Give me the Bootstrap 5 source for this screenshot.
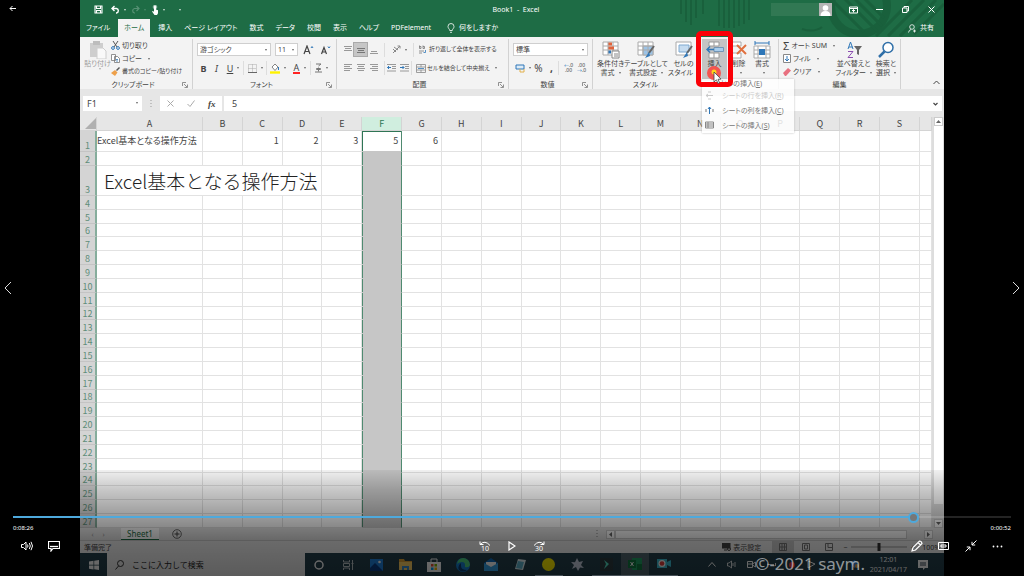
<!DOCTYPE html>
<html lang="ja">
<head>
<meta charset="utf-8">
<meta name="viewport" content="width=device-width, initial-scale=1">
<title>Book1 - Excel</title>
<link href="https://cdn.jsdelivr.net/npm/bootstrap@5.3.0/dist/css/bootstrap.min.css" rel="stylesheet">
<style>
:root{--xl:#1e6c45;--ink:#444;--line:#e2e2e2}
html,body{height:100%}
body{background:#000;font-family:"Noto Sans","Noto Sans CJK JP",sans-serif;font-size:7px;line-height:9px;color:var(--ink);overflow:hidden}
button,input,select{font:inherit;color:inherit;border:0;background:none;padding:0;margin:0;border-radius:0;appearance:none}
button{display:inline-flex;align-items:center;justify-content:center;white-space:nowrap}
svg{display:block;flex:none}
svg:not([fill]){fill:none}
svg:not([stroke]){stroke:currentColor}
a{color:inherit;text-decoration:none}
.palt{font-feature-settings:"palt"}
.even{flex:1 1 0;min-width:0}
.stage{margin:0 80px;height:100%}
/* title and tabs */
.titlebar{background:var(--xl);color:#fff;height:37px}
.deco{top:0;right:0;width:350px;height:37px;opacity:.4}
.caption-row{height:19px}
.caption-row .ic{width:20px}
.winbtn{width:26px;height:18px}
.acct{width:48px;height:13px;background:#3d805e;opacity:.6}
.tabs a{padding:0 6px;line-height:18px;height:18px;white-space:nowrap}
.tabs a.on{background:#f3f3f3;color:var(--xl);margin:0 2px;padding:0 6px}
.dd::after{content:"";border:1px solid transparent;border-top:2px solid currentColor;border-bottom:0;margin-left:4px;opacity:.8;display:inline-block;vertical-align:middle}
/* ribbon */
.ribbon{background:#f3f3f3;height:52px}
.grp{border-right:1px solid #d2d2d2;margin:2px 0 0;padding:0 4px;min-width:0}
.grp .body{height:41px}
.grp .cap{height:9px;line-height:9px}
.line{height:13px;gap:2px;white-space:nowrap}
.line2{height:18px;white-space:nowrap}
.line2+.line2{height:14px}
.tight{font-size:6px}
.ib{width:13px;height:13px;flex:none}
.ib.on{background:#c6c6c6;outline:1px solid #aaa}
.vsep{width:1px;height:14px;background:#ddd;flex:none}
.big{flex-direction:column;justify-content:flex-start;padding-top:2px;line-height:9px}
.big svg{width:18px;height:18px}
.pick{background:#fff;border:1px solid #cfcfcf;height:13px;padding:0 2px;min-width:0}
.pickwrap::after{content:"";position:absolute;right:4px;top:6px;border:1px solid transparent;border-top:2px solid #666;border-bottom:0}
.g1{flex:104 1 0}.g2{flex:135 1 0}.g3{flex:163 1 0}.g4{flex:75 1 0}.g5{flex:97 1 0}.g6{flex:72 1 0}.g7{flex:113 1 0}.g8{flex:35 1 0}
.ins{background:#c4c4c4;width:25px;height:42px}
.ring{left:-6px;top:-8px;width:37px;height:56px;border:5px solid #fb0007;border-radius:5px;z-index:5}
.spot{left:5px;top:26px;z-index:6}
.menu{left:0;top:40px;width:92px;height:54px;background:rgba(255,255,255,.84);box-shadow:0 0 2px #bbb;z-index:3;color:#999;font-size:7px}
.menu button{height:15px;gap:8px;padding-left:3px;justify-content:flex-start}
.menu button:first-child{height:9px;padding-left:18px}
/* formula bar */
.fbar{background:#e6e6e6;height:28px;padding:7px 2px 6px 3px}
.fbox{background:#fff;height:15px}
.fbar input{font-size:9px}
/* grid */
.sheetwrap{background:#fff}
.xl{table-layout:fixed;width:100%;height:100%;border-collapse:separate;border-spacing:0;font-family:"Noto Sans CJK JP",sans-serif;font-size:9px;line-height:10px}
.xl th,.xl td{padding:0;border-right:1px solid var(--line);border-bottom:1px solid var(--line);white-space:nowrap}
.xl thead th{background:#e6e6e6;height:14px;font-weight:400;text-align:center;border-color:#d4d4d4}
.xl tbody th{background:#d4d4d4;color:#5e8d79;font-weight:400;text-align:center;vertical-align:bottom;border-right:2px solid #86ad9c;border-bottom-color:#c4c4c4}
.xl td.n{text-align:right;padding-right:3px}
.xl .selh{background:#d0eedf;color:#2f7555}
.xl td.sel{background:#c6c6c6;border-right:1px solid #4f8a70;border-bottom-color:#c6c6c6;box-shadow:inset 1px 0 #4f8a70}
.xl td.act{background:#fff;box-shadow:inset 1px 1px #2f7555}
.xl td.big-text{font-size:19px;line-height:24px;padding-left:7px;font-weight:300;color:#222}
.corner{clip-path:polygon(100% 0,100% 100%,0 100%);background:#b0b0b0;width:11px;height:11px;margin-left:auto}
.vbar{width:12px;background:#ddd;padding:0 1px 0 2px;flex:none}
.sb{background:#fff;border:1px solid #ccc;height:9px}
.foot{background:#e6e6e6;height:12px}
.foot .tab{background:#fff;color:var(--xl);border-bottom:1px solid var(--xl);font-size:8px;width:38px;height:12px;margin-left:12px}
.status{background:#f0f0f0;height:13px;border-top:1px solid #ccc}
.taskbar{background:#24404c;height:23px;color:#fff}
.find{background:#efefef;color:#333;flex:190 1 0;font-size:8px}
.find input{font-size:8px}
.find input::placeholder{color:#222;opacity:1}
.apps{flex:373 1 0}
.apps>button{flex:1 1 0;height:23px}
.apps .run{border-bottom:1px solid #b9d3e6}
.apps .cur{background:#50656e}
.tray{flex:266 1 0}
/* player */
.hud{left:0;right:0;bottom:0;height:106px;padding:0 13px;background:linear-gradient(rgba(0,0,0,.06),rgba(0,0,0,.22) 20px,rgba(0,0,0,.42) 50px,rgba(0,0,0,.56) 72px,rgba(0,0,0,.62));color:#fff}
.seek{display:block;width:100%;height:12px;margin-top:41px;background:linear-gradient(90deg,#4ea9dc var(--at),rgba(255,255,255,.14) var(--at)) center/100% 2px no-repeat}
.seek::-webkit-slider-thumb{appearance:none;width:11px;height:11px;border:2px solid #4ea9dc;border-radius:50%;background:#777}
.ctl{width:27px;height:20px}
.skip{flex-direction:column;line-height:6px}
.mark-text{right:159px;bottom:1px;font-size:17px;line-height:22px;color:rgba(255,255,255,.55);z-index:4}
.nav-x{top:50%;transform:translateY(-50%);color:#ddd}
.tc{font-size:6px;line-height:10px}
</style>
</head>
<body class="position-relative">
<main class="stage d-flex flex-column">
  <header class="titlebar position-relative">
    <svg class="deco position-absolute" viewBox="0 0 350 37" preserveAspectRatio="xMaxYMin slice" stroke="#124f2f" fill="none">
      <path stroke-width="2" d="M87 0v14M92 0v22M97 0v25M102 0v18M109 0v14M125 0v26M130 0v28M135 0v28M140 0v28M145 0v26M150 0v24M155 0v20"/>
      <circle cx="265" cy="6" r="28" stroke-width="8"/><path stroke-width="3" d="M244-8l40 40M254-8l34 34M264-8l26 26M236-2l34 34M318 0l-36 36M330 0l-36 36M342 0l-36 36M350 4l-30 30"/>
      <path d="M208 29q12 4 20-2" stroke-width="2"/>
    </svg>
    <div class="caption-row d-flex align-items-center position-relative">
      <div class="even d-flex align-items-center ps-2">
        <button class="ic" aria-label="保存"><svg width="9" height="9" viewBox="0 0 9 9"><path d="M1 1h7v7H1zM2.500 1v2.500h4V1M2.500 8V5.500h4V8" stroke-width="1.100"/></svg></button>
        <button class="ic dd" aria-label="元に戻す"><svg width="9" height="9" viewBox="0 0 9 9"><path d="M3.500 1L1 3.500 3.500 6M1 3.500h4.500a2.300 2.300 0 010 4.500H5" stroke-width="1.400"/></svg></button>
        <button class="ic dd opacity-25" aria-label="やり直し"><svg width="9" height="9" viewBox="0 0 9 9"><path d="M5.500 1L8 3.500 5.500 6M8 3.500H3.500a2.300 2.300 0 000 4.500H4" stroke-width="1.200"/></svg></button>
        <button class="ic dd" aria-label="タッチ"><svg width="8" height="10" viewBox="0 0 8 10"><path fill="#fff" stroke="none" d="M3 1.500a1 1 0 012 0v3l2 .7v3L6 10H3.500L1 6.500l.8-.6 1.200.8z"/><circle cx="4" cy="2" r="1.800" stroke-width=".6"/></svg></button>
        <button class="ic dd" aria-label="クイックアクセスの設定"></button>
      </div>
      <div class="text-center" style="white-space:pre">Book1  -  Excel</div>
      <div class="even d-flex align-items-center justify-content-end">
        <div class="acct"></div>
        <svg width="13" height="13" viewBox="0 0 13 13" stroke="none"><path fill="#b5b5b5" d="M0 0h13v13H0z"/><circle cx="6.500" cy="5" r="2.800" fill="#fff"/><path fill="#fff" d="M1.500 13q0-5 5-5t5 5z"/></svg>
        <button class="winbtn ms-2" aria-label="リボンの表示"><svg width="9" height="8" viewBox="0 0 9 8"><path d="M.5 1h8v6h-8zM.5 2.500h8M4.500 6.500v-3M3 5l1.500-1.500L6 5"/></svg></button>
        <button class="winbtn" aria-label="最小化"><svg width="7" height="7" viewBox="0 0 7 7"><path d="M0 3.500h7"/></svg></button>
        <button class="winbtn" aria-label="元のサイズに戻す"><svg width="7" height="7" viewBox="0 0 7 7"><path d="M.5 2h4.500v4.500H.5zM2 2V.5h4.500V5H5"/></svg></button>
        <button class="winbtn" aria-label="閉じる"><svg width="7" height="7" viewBox="0 0 7 7"><path d="M.5.5l6 6M6.500.5l-6 6"/></svg></button>
      </div>
    </div>
    <nav class="tabs palt d-flex position-relative">
      <a href="#">ファイル</a><a href="#" class="on">ホーム</a><a href="#">挿入</a><a href="#">ページ レイアウト</a><a href="#">数式</a><a href="#">データ</a><a href="#">校閲</a><a href="#">表示</a><a href="#">ヘルプ</a><a href="#">PDFelement</a>
      <a href="#" class="d-flex align-items-center gap-1 ms-1"><svg width="8" height="10" viewBox="0 0 8 10"><path d="M2.700 7.500C2.700 6 1 5.500 1 3.500a3 3 0 016 0c0 2-1.700 2.500-1.700 4zM3 9.300h2" stroke-width=".8"/></svg>何をしますか</a>
      <a href="#" class="ms-auto d-flex align-items-center gap-1 me-1"><svg width="8" height="9" viewBox="0 0 8 9"><circle cx="4" cy="3" r="2.300" stroke-width=".8"/><path d="M.5 8.500Q1 6 3 5.500M5 7h3M6.500 5.500v3" stroke-width=".8"/></svg>共有</a>
    </nav>
  </header>

  <section class="ribbon palt d-flex">
    <div class="grp g1 d-flex flex-column">
      <div class="body d-flex">
        <button class="big dd opacity-50" style="width:27px"><svg viewBox="0 0 18 18" stroke="none"><path fill="#aaa" d="M1 2h13v14H1z"/><path fill="#888" d="M4 0h7v4H4z"/><path fill="#fff" stroke="#aaa" d="M8 7h6l3 3v8H8z"/></svg><span>貼り付け</span></button>
        <div>
          <button class="line d-flex"><svg width="9" height="9" viewBox="0 0 9 9"><path d="M2 0l4 6M7 0L3 6" stroke="#555"/><circle cx="2" cy="7" r="1.400" stroke="#2f77b8"/><circle cx="7" cy="7" r="1.400" stroke="#2f77b8"/></svg>切り取り</button>
          <button class="line d-flex dd"><svg width="9" height="9" viewBox="0 0 9 9" stroke="#777" stroke-width=".8"><path fill="#fff" d="M.5.5h4v6h-4zM3.500 2.500h3l2 2v4h-5z"/><path d="M5 5.500h2M5 7h2" stroke="#2f77b8"/></svg>コピー</button>
          <button class="line d-flex tight"><svg width="9" height="9" viewBox="0 0 9 9" stroke="none"><path fill="#555" d="M5 3l3-3 1 1-3 3z"/><path fill="#eda04a" d="M0 6l4-3 2.500 2.500L4 9z"/></svg>書式のコピー/貼り付け</button>
        </div>
      </div>
      <div class="cap d-flex align-items-center"><span class="flex-fill text-center">クリップボード</span><svg width="6" height="6" viewBox="0 0 6 6" stroke="#777" stroke-width=".8"><path d="M.5 4V.5H4M2 2l3 3M5.500 2.500v3h-3"/></svg></div>
    </div>
    <div class="grp g2 d-flex flex-column">
      <div class="body pt-1">
        <div class="line2 d-flex align-items-start gap-1">
          <label class="pickwrap position-relative d-flex flex-fill"><select class="pick w-100" aria-label="フォント名"><option>游ゴシック</option></select></label>
          <label class="pickwrap position-relative d-flex"><select class="pick" style="width:23px" aria-label="サイズ"><option>11</option></select></label>
          <button class="ib" aria-label="フォントサイズの拡大"><svg width="11" height="10" viewBox="0 0 11 10"><path d="M1 9l3-8 3 8M2 6.500h4" stroke-width="1.200"/><path d="M8 3l1-1.500L10 3" stroke="#2f77b8"/></svg></button>
          <button class="ib" aria-label="フォントサイズの縮小"><svg width="11" height="10" viewBox="0 0 11 10"><path d="M1.500 9L4 2.500 6.500 9M2.500 7h3" stroke-width="1.200"/><path d="M8 1.500L9 3l1-1.500" stroke="#2f77b8"/></svg></button>
        </div>
        <div class="line2 d-flex align-items-center" style="font-size:9px">
          <button class="ib fw-bold">B</button><button class="ib fst-italic">I</button><button class="ib dd" style="width:20px"><u>U</u></button><span class="vsep"></span>
          <button class="dd" style="width:22px" aria-label="罫線"><svg width="9" height="9" viewBox="0 0 9 9" stroke="#aaa"><path d="M.5.5h8v8h-8zM4.500.5v8M.5 4.500h8" stroke-dasharray="1 1"/><path d="M0 8.500h9" stroke="#666"/></svg></button><span class="vsep"></span>
          <button class="dd" style="width:22px" aria-label="塗りつぶし"><svg width="10" height="11" viewBox="0 0 10 11"><path d="M2 4l3-3 3 3-3 3.500z" fill="#fff" stroke="#666" stroke-width=".8"/><path d="M8.500 4v3" stroke="#2f77b8"/><path d="M0 9.500h10" stroke="#fff200" stroke-width="2.400"/></svg></button>
          <button class="dd" style="width:21px" aria-label="文字の色"><span style="border-bottom:2px solid #f22;line-height:9px;padding:0 1px">A</span></button><span class="vsep"></span>
          <button class="dd" style="width:20px" aria-label="ふりがな"><svg width="7" height="10" viewBox="0 0 7 10" stroke="#777"><path d="M1 1h5L3.500 3M1.500 5.500h4v1h-4zM3.500 4.500v4M0 9h7"/></svg></button>
        </div>
      </div>
      <div class="cap d-flex align-items-center"><span class="flex-fill text-center">フォント</span><svg width="6" height="6" viewBox="0 0 6 6" stroke="#777" stroke-width=".8"><path d="M.5 4V.5H4M2 2l3 3M5.500 2.500v3h-3"/></svg></div>
    </div>
    <div class="grp g3 d-flex flex-column">
      <div class="body pt-1">
        <div class="line2 d-flex align-items-start">
          <button class="ib" aria-label="上揃え"><svg width="8" height="8" stroke="#999"><path d="M0 .5h8M1 2.500h6M0 4.500h8"/></svg></button>
          <button class="ib on" aria-label="上下中央揃え"><svg width="8" height="8" stroke="#777"><path d="M0 2.500h8M1 4.500h6M0 6.500h8"/></svg></button>
          <button class="ib" aria-label="下揃え"><svg width="8" height="8" stroke="#999"><path d="M1 5.500h6M0 7.500h8"/></svg></button>
          <span class="vsep ms-1 me-1"></span>
          <button class="dd" style="width:20px;height:13px" aria-label="方向"><svg width="9" height="9" viewBox="0 0 9 9" stroke="#888"><path d="M1 8l7-7M5.500 1H8v2.500M1 4l3 3M2 2l4 3"/></svg></button>
          <span class="vsep ms-1 me-1"></span>
          <button class="tight" style="height:13px;gap:2px"><svg width="9" height="9" viewBox="0 0 9 9" stroke="#777" stroke-width=".8"><path d="M1.500.5v3h1.500v-2H1.500M5 .5v3h1.500v-2H5M1 6h5M1 8h3"/><path d="M7.500 5v2.500H5.500" stroke="#2f77b8"/></svg>折り返して全体を表示する</button>
        </div>
        <div class="line2 d-flex align-items-center">
          <button class="ib" aria-label="左揃え"><svg width="8" height="8" stroke="#999"><path d="M0 .5h8M0 2.500h6M0 4.500h8M0 6.500h6"/></svg></button>
          <button class="ib" aria-label="中央揃え"><svg width="8" height="8" stroke="#999"><path d="M0 .5h8M1 2.500h6M0 4.500h8M1 6.500h6"/></svg></button>
          <button class="ib" aria-label="右揃え"><svg width="8" height="8" stroke="#999"><path d="M0 .5h8M2 2.500h6M0 4.500h8M2 6.500h6"/></svg></button>
          <span class="vsep ms-1"></span>
          <button class="ib" aria-label="インデントを減らす"><svg width="9" height="8" viewBox="0 0 9 8" stroke="#999"><path d="M0 .5h9M5 2.500h4M5 4.500h4M0 7h9"/><path d="M4 3.500H.5L2 2M.5 3.500L2 5" stroke="#2f77b8"/></svg></button>
          <button class="ib" aria-label="インデントを増やす"><svg width="9" height="8" viewBox="0 0 9 8" stroke="#999"><path d="M0 .5h9M5 2.500h4M5 4.500h4M0 7h9"/><path d="M0 3.500h4L2.500 2M4 3.500L2.500 5" stroke="#2f77b8"/></svg></button>
          <span class="vsep me-1"></span>
          <button class="dd tight" style="gap:1px"><svg width="10" height="9" viewBox="0 0 10 9" stroke="#888" stroke-width=".8"><path d="M.5.5h9v8h-9zM.5 3h9M.5 6h9M5 .5V3M5 6v2.500"/><path d="M2 4.500h6" stroke="#2f77b8"/></svg>セルを結合して中央揃え</button>
        </div>
      </div>
      <div class="cap d-flex align-items-center"><span class="flex-fill text-center">配置</span><svg width="6" height="6" viewBox="0 0 6 6" stroke="#777" stroke-width=".8"><path d="M.5 4V.5H4M2 2l3 3M5.500 2.500v3h-3"/></svg></div>
    </div>
    <div class="grp g4 d-flex flex-column">
      <div class="body pt-1">
        <div class="line2 d-flex align-items-start"><label class="pickwrap position-relative d-flex flex-fill"><select class="pick w-100" aria-label="表示形式"><option>標準</option></select></label></div>
        <div class="line2 d-flex align-items-center">
          <button class="dd" style="width:19px" aria-label="通貨"><svg width="10" height="9" viewBox="0 0 10 9"><path d="M1 1h8v4H1z" stroke="#2f77b8" fill="#dcebf7"/><path d="M5 5v3h4V5" stroke="#e2b04a"/></svg></button>
          <button class="ib" style="font-size:10px">%</button><button class="ib fw-bold" style="font-size:10px">,</button><span class="vsep"></span>
          <button class="ib ms-auto" style="font-size:5px;line-height:5px"><span><span style="color:#2f77b8">←</span>.0<br>.00</span></button>
          <button class="ib" style="font-size:5px;line-height:5px"><span>.00<br><span style="color:#2f77b8">→</span>.0</span></button>
        </div>
      </div>
      <div class="cap d-flex align-items-center"><span class="flex-fill text-center">数値</span><svg width="6" height="6" viewBox="0 0 6 6" stroke="#777" stroke-width=".8"><path d="M.5 4V.5H4M2 2l3 3M5.500 2.500v3h-3"/></svg></div>
    </div>
    <div class="grp g5 border-0 d-flex flex-column">
      <div class="body d-flex justify-content-between">
        <button class="big"><svg viewBox="0 0 18 18" stroke="#aaa"><path fill="#fff" d="M1 1h15v13H1zM1 5h15M1 9h15M11 1v13"/><path d="M6 3h4M6 7h6" stroke="#e0633b" stroke-width="3"/><path d="M6 11h3" stroke="#2f77b8" stroke-width="3"/><path d="M6 1v13"/><path fill="#fff" stroke="#888" d="M10 10h7v7h-7zM12 13h4M12 15h4"/></svg><span>条件付き</span><span class="dd">書式</span></button>
        <button class="big"><svg viewBox="0 0 18 18" stroke="#aaa"><path fill="#fff" d="M1 1h15v13H1z"/><path fill="#9cc3e6" d="M6 5h10v9H6z"/><path d="M1 5h15M1 9h15M6 1v13M11 1v13"/><path d="M17 5l-5 7" stroke="#666" stroke-width="2"/><path d="M12 11l-4 6 5-2z" fill="#2f77b8" stroke="none"/></svg><span>テーブルとして</span><span class="dd">書式設定</span></button>
        <button class="big"><svg viewBox="0 0 18 18" stroke="#aaa"><path fill="#fff" d="M1 1h15v13H1z"/><path fill="#c6dcf0" stroke="#7fa9d0" d="M4 4h10v7H4z"/><path d="M17 5l-5 7" stroke="#666" stroke-width="2"/><path d="M12 11l-4 6 5-2z" fill="#2f77b8" stroke="none"/></svg><span>セルの</span><span class="dd">スタイル</span></button>
      </div>
      <div class="cap text-center">スタイル</div>
    </div>
    <div class="grp g6 d-flex flex-column">
      <div class="body d-flex">
        <div class="position-relative">
          <button class="big ins"><svg viewBox="0 0 18 18" stroke="#999"><path fill="#fff" d="M3 1h10v4H3zM8 1v4M3 12h10v5H3zM8 12v5"/><path fill="#a9cdec" stroke="#7395b5" d="M8 6.500h9.500v4H8z"/><path d="M8 8.500H1M4 5.500l-3 3 3 3" stroke="#2f77b8" stroke-width="1.500" fill="none"/></svg><span>挿入</span></button>
          <div class="ring position-absolute"></div>
          <svg class="spot position-absolute" width="16" height="20" viewBox="0 0 16 20" stroke="none"><circle cx="7" cy="8" r="7" fill="#f5544f"/><circle cx="7" cy="7" r="2.500" fill="#ffd21a"/><path fill="#fff" stroke="#444" stroke-width=".8" d="M7 7v10l2.400-2.200L11 18.500l1.600-.7-1.600-3.500 3-.2z"/></svg>
          <div class="menu position-absolute d-flex flex-column">
            <button style="color:#777"><span>セルの挿入(<u>E</u>)</span></button>
            <button class="opacity-50"><svg width="9" height="9" viewBox="0 0 9 9"><path d="M3 1h3M3 8h3M1 4.500h7M3 3L1 4.500 3 6"/></svg><span>シートの行を挿入(<u>R</u>)</span></button>
            <button style="color:#777"><svg width="9" height="9" viewBox="0 0 9 9"><path d="M1 3v3M8 3v3"/><path d="M4.500 8V1M3 3l1.500-2L6 3" stroke="#2f77b8"/></svg><span>シートの列を挿入(<u>C</u>)</span></button>
            <button style="color:#777"><svg width="9" height="9" viewBox="0 0 9 9" stroke="#888"><path d="M.5 1h8v6h-8zM.5 3h8M.5 5h8M3 1v6"/></svg><span>シートの挿入(<u>S</u>)</span></button>
          </div>
        </div>
        <button class="big" style="width:23px"><svg viewBox="0 0 18 18" stroke="#aaa"><path fill="#fff" d="M2 1h9v4H2zM2 12h9v5H2z"/><path d="M7 4l9 9M16 4l-9 9" stroke="#e0703f" stroke-width="2"/></svg><span>削除</span><span class="dd"></span></button>
        <button class="big" style="width:24px"><svg viewBox="0 0 18 18" stroke="#aaa"><path fill="#fff" d="M1 5h16v12H1zM1 9h16M1 13h16M5 5v12M13 5v12"/><path d="M2 2h14M2 0v4M16 0v4" stroke="#2f77b8"/><path fill="#2f77b8" stroke="none" d="M6 8h6v6H6z"/></svg><span>書式</span><span class="dd"></span></button>
      </div>
    </div>
    <div class="grp g7 d-flex flex-column">
      <div class="body d-flex">
        <div class="flex-fill">
          <button class="line d-flex dd"><span style="font-size:11px">Σ</span>オート SUM</button>
          <button class="line d-flex dd"><svg width="8" height="9" viewBox="0 0 8 9"><path d="M.5.5h7v8h-7z" stroke="#888" fill="#fff"/><path d="M4 2v5M2 5l2 2 2-2" stroke="#2f77b8"/></svg>フィル</button>
          <button class="line d-flex dd"><svg width="8" height="8" viewBox="0 0 8 8"><path fill="#e8707f" stroke="none" d="M0 5l5-5 3 2.500-5 5.500H2z"/></svg>クリア</button>
        </div>
        <button class="big"><svg viewBox="0 0 18 18"><path d="M3 8l2.500-7L8 8M4 6h3.500" stroke="#2f77b8"/><path d="M3 10.500h5l-5 6h5" stroke="#8c4fb0"/><path fill="#666" stroke="none" d="M9 5h8l-3 4v5l-2-1V9z"/></svg><span>並べ替えと</span><span class="dd">フィルター</span></button>
        <button class="big ms-1 me-1"><svg viewBox="0 0 18 18" stroke="#2f6fa8"><circle cx="11" cy="6.500" r="5" fill="#fff" stroke-width="1.500"/><path d="M7.500 10.500L2 16" stroke-width="2.500"/></svg><span>検索と</span><span class="dd">選択</span></button>
      </div>
      <div class="cap text-center">編集</div>
    </div>
    <div class="g8 d-flex align-items-end justify-content-end p-1"><svg width="7" height="5" viewBox="0 0 7 5"><path d="M.5 4l3-3 3 3"/></svg></div>
  </section>

  <section class="fbar d-flex">
    <label class="fbox pickwrap position-relative d-flex" style="width:59px"><input class="w-100 px-1" value="F1" aria-label="名前ボックス"></label>
    <div class="d-flex align-items-center justify-content-center" style="width:18px;color:#999"><svg width="2" height="8"><path d="M1 0v8" stroke-dasharray="1 2"/></svg></div>
    <div class="fbox d-flex justify-content-around align-items-center" style="width:62px;color:#aaa">
      <button aria-label="キャンセル"><svg width="7" height="7"><path d="M.5.5l6 6M6.500.5l-6 6"/></svg></button>
      <button aria-label="入力"><svg width="8" height="7"><path d="M.5 4l2.500 2.500 4.500-6"/></svg></button>
      <button style="font:italic bold 9px 'Liberation Serif',serif;color:#444">fx</button>
    </div>
    <label class="fbox d-flex flex-fill align-items-center" style="margin-left:2px"><input class="flex-fill px-2" value="5" aria-label="数式バー"><svg class="me-1" width="5" height="4" viewBox="0 0 5 4"><path d="M.5 1l2 2 2-2" stroke-width="1.200"/></svg></label>
  </section>

  <section class="sheetwrap d-flex flex-fill" style="min-height:0">
    <div class="even"><table class="xl" id="grid"></table></div>
    <div class="vbar d-flex flex-column">
      <button class="sb" aria-label="上へ"><svg width="5" height="3"><path d="M0 3l2.500-3L5 3z" fill="#666" stroke="none"/></svg></button>
      <div class="flex-fill bg-white"></div>
      <div style="height:15px"></div>
      <button class="sb" aria-label="下へ"><svg width="5" height="3"><path d="M0 0l2.500 3L5 0z" fill="#666" stroke="none"/></svg></button>
    </div>
  </section>

  <section class="foot d-flex align-items-center">
    <button style="width:11px;margin-left:7px;color:#999">‹</button><button style="width:11px;color:#999">›</button>
    <button class="tab">Sheet1</button>
    <button style="margin-left:13px" aria-label="新しいシート"><svg width="10" height="10" viewBox="0 0 10 10"><circle cx="5" cy="5" r="4.300" stroke-width=".8"/><path d="M2.500 5h5M5 2.500v5"/></svg></button>
    <div class="d-flex ms-auto align-items-center" style="width:39%;margin-right:11px"><svg width="10" height="8" stroke="#888"><path d="M1 0v8" stroke-dasharray="1 2"/></svg>
      <button class="sb" style="width:9px" aria-label="左へ"><svg width="3" height="5"><path d="M3 0L0 2.500 3 5z" fill="#666" stroke="none"/></svg></button><div class="sb flex-fill"></div><div style="width:17px"></div><button class="sb" style="width:9px" aria-label="右へ"><svg width="3" height="5"><path d="M0 0l3 2.500L0 5z" fill="#666" stroke="none"/></svg></button></div>
  </section>
  <section class="status d-flex align-items-center ps-1">
    <span>準備完了</span>
    <div class="d-flex align-items-center ms-auto palt">
      <button style="gap:2px"><svg width="9" height="8" viewBox="0 0 9 8"><path d="M0 0h8v5H0zM2 7h3" fill="#444"/><circle cx="7" cy="6" r="1.500"/></svg>表示設定</button>
      <button style="width:22px;height:12px;background:#ccc;margin-left:11px" aria-label="標準"><svg width="8" height="8" stroke="#777"><path d="M.5.5h7v7h-7zM.5 4h7M3 .5v7M5.500.5v7"/></svg></button>
      <button style="width:23px" aria-label="ページレイアウト"><svg width="8" height="8" stroke="#777"><path d="M.5.5h7v7h-7zM2.500 2h3v4h-3z"/></svg></button>
      <button style="width:23px" aria-label="改ページ"><svg width="8" height="8" stroke="#777"><path d="M.5.5h7v7h-7zM3 .5v4h4.500"/></svg></button>
      <button style="width:11px">−</button>
      <svg width="56" height="8" viewBox="0 0 56 8" stroke="#999"><path d="M0 4h56"/><path d="M28 0v8" stroke="#333" stroke-width="3"/></svg>
      <button style="width:11px">+</button><span class="ps-1 pe-1">100%</span>
    </div>
  </section>
  <footer class="taskbar d-flex align-items-stretch">
    <button style="width:27px;flex:none" aria-label="スタート"><svg width="10" height="10" viewBox="0 0 10 10" stroke="none" fill="#fff"><path d="M0 1.500l4.500-.7v4H0zM5.200.7L10 0v4.800H5.200zM0 5.500h4.500v4L0 8.800zM5.200 5.500H10V10l-4.800-.7z"/></svg></button>
    <label class="find d-flex align-items-center ps-2 gap-2"><svg width="9" height="10" viewBox="0 0 9 10"><circle cx="5.500" cy="3.500" r="3"/><path d="M3.500 6L.5 9.500"/></svg><input class="even" placeholder="ここに入力して検索" aria-label="検索"></label>
    <div class="apps d-flex">
      <button aria-label="Cortana"><svg width="10" height="10"><circle cx="5" cy="5" r="4" stroke-width="1.500"/></svg></button>
      <button aria-label="タスクビュー"><svg width="11" height="10" viewBox="0 0 11 10" opacity=".7"><path d="M.5 0v2h6V0M.5 3.500h6v3h-6zM.5 10V8h6v2M9.500 0v10M8.500 3.500h2"/></svg></button>
      <button aria-label="フォト"><svg width="13" height="12" viewBox="0 0 13 12" stroke="none"><path fill="#1f83e0" d="M0 0h13v12H0z"/><path fill="#0b3d86" d="M0 9l5-5 8 8H0z"/><circle cx="9.500" cy="3" r="1.300" fill="#fff"/></svg></button>
      <button aria-label="エクスプローラー"><svg width="13" height="11" viewBox="0 0 13 11" stroke="none"><path fill="#e0a336" d="M0 0h5l1 2h7v9H0z"/><path fill="#ffd366" d="M0 3h13v8H0z"/><path fill="#3d8fd1" d="M3 11V7h7v4H8V9H5v2z"/></svg></button>
      <button aria-label="ストア"><svg width="14" height="14" viewBox="0 0 14 14" stroke="none"><path d="M4 4V1h6v3" stroke="#fff" fill="none"/><path fill="#fff" d="M0 4h14v10H0z"/><path fill="#e94f32" d="M4 6h2.500v2.500H4z"/><path fill="#7fba00" d="M7.500 6H10v2.500H7.500z"/><path fill="#00a4ef" d="M4 9.500h2.500V12H4z"/><path fill="#ffb900" d="M7.500 9.500H10V12H7.500z"/></svg></button>
      <button aria-label="Edge"><svg width="14" height="14" viewBox="0 0 14 14" stroke="none"><circle cx="7" cy="7" r="7" fill="#1680d0"/><path fill="#4fd27f" d="M7 0a7 7 0 017 7q-1 3-5 2V7Q9 4 6 4 3 4 1 6 2 0 7 0z"/><path fill="#0b3c70" d="M5 8q0 4 6 4-4 3-8 0-2-4 2-7z"/></svg></button>
      <button aria-label="メール"><svg width="14" height="13" viewBox="0 0 14 13" stroke="none"><path fill="#0f6cbd" d="M0 5l7-5 7 5v8H0z"/><path fill="#fff" d="M2 4h10v5H2z"/><path fill="#35a4ea" d="M0 5l7 4 7-4v8H0z"/></svg></button>
      <button aria-label="メモ帳"><svg width="12" height="13" viewBox="0 0 12 13" stroke="none"><path fill="#e6f3f8" d="M4 1l8 1-3 10-8-1z"/><path fill="#60b6d0" d="M4 3l6 1-2 7-6-1z"/></svg></button>
      <button class="run" aria-label="録画"><svg width="13" height="13"><circle cx="6.500" cy="6.500" r="6.500" fill="#ffef00" stroke="none"/></svg></button>
      <button aria-label="スター"><svg width="13" height="13" viewBox="0 0 13 13" stroke="none"><path fill="#c7cfe0" d="M6 0l2 4 4-1-2 4 3 3-4-.5L7 13 5 9 1 11l2-4-3-3 4 .3z"/></svg></button>
      <button class="run" aria-label="Filmora"><svg width="13" height="13" viewBox="0 0 13 13" stroke="none"><path fill="#2c3b40" d="M0 0h13v13H0z"/><path fill="#55e0c4" d="M4 2l5 4-5 5 2-5z"/></svg></button>
      <button class="cur run" aria-label="Excel"><svg width="14" height="12" viewBox="0 0 14 12"><path fill="#21a366" stroke="none" d="M4 0h10v12H4z"/><path fill="#107c41" stroke="none" d="M0 2h8v8H0zM9 6h5v6H9z"/><path d="M2.500 4l3 4M5.500 4l-3 4" stroke="#fff"/></svg></button>
      <button class="run" aria-label="カメラ"><svg width="14" height="12" viewBox="0 0 14 12" stroke="none"><path fill="#3ec0d8" d="M0 1h10v9H0zM10 4l4-2v7l-4-2z"/><circle cx="5" cy="5.500" r="3.500" fill="#fff"/><circle cx="5" cy="5.500" r="2.300" fill="#e23b3b"/></svg></button>
    </div>
    <div class="tray d-flex align-items-center justify-content-end" style="gap:11px">
      <svg width="8" height="5" viewBox="0 0 8 5"><path d="M.5 4.500l3.500-4 3.500 4"/></svg>
      <svg width="9" height="9" viewBox="0 0 9 9" stroke-width=".8"><path d="M.5 3v3h1.500l2.500 2V1L2 3zM6 3v3M8 2v5"/></svg>
      <svg width="9" height="9" viewBox="0 0 9 9"><path d="M.5 1.500h5v6h-5zM5.500 4l3-2v5l-3-2M0 4h5"/></svg>
      <svg width="9" height="9" viewBox="0 0 9 9"><path d="M0 4.500h7M8.500 3v3M0 3v3"/></svg>
      <svg width="9" height="9" viewBox="0 0 9 9" stroke="none"><circle cx="5" cy="5" r="3" fill="#f04040"/></svg>
      <svg width="9" height="9" viewBox="0 0 9 9"><path d="M1 1l7 3-7 4z"/></svg>
      <span style="width:12px"></span>
      <svg width="9" height="9" viewBox="0 0 9 9" stroke="none"><path fill="#3f8ae0" d="M0 2l5-2 3 6-4 2z"/><circle cx="7" cy="6" r="2" fill="#f0a030"/></svg>
      <div class="text-center" style="line-height:10px">12:01<br>2021/04/17</div>
      <svg class="me-3" width="10" height="10" viewBox="0 0 10 10"><path fill="#fff" stroke="none" d="M0 0h10v8H7L5 10V8H0z"/><path d="M2 3h6M2 5h6" stroke="#345"/></svg>
    </div>
  </footer>
</main>

<div class="mark-text position-absolute">©-2021 saym.</div>

<section class="hud position-absolute">
  <input type="range" class="seek" min="0" max="558" value="506" style="--at:90%" aria-label="再生位置">
  <div class="d-flex justify-content-between tc"><span>0:08:26</span><span>0:00:52</span></div>
  <div class="d-flex align-items-center" style="margin-top:3px">
    <div class="even d-flex">
      <button class="ctl" aria-label="音量"><svg width="12" height="10" viewBox="0 0 12 10"><path d="M.5 3.500v3h2l2.500 2.500V1L2.500 3.500zM6.500 3.500q1 1.500 0 3M8.300 2q2 3 0 6M10 .8q3 4.200 0 8.400"/></svg></button>
      <button class="ctl" aria-label="字幕"><svg width="12" height="11" viewBox="0 0 12 11"><path d="M.5.500h11v7H5L3 10V7.500H.5z" stroke-width="1.200"/><path d="M2 5.500h8" stroke-width="1.300"/></svg></button>
    </div>
    <div class="d-flex">
      <button class="ctl skip" aria-label="10秒戻す"><svg width="12" height="5" viewBox="0 0 12 5"><path d="M1 3.500q5-5 10 1M1 .5v3h3.500"/></svg>10</button>
      <button class="ctl" aria-label="再生"><svg width="8" height="10" viewBox="0 0 8 10"><path d="M1 1l6 4-6 4z" stroke-width="1.200"/></svg></button>
      <button class="ctl skip" aria-label="30秒進む"><svg width="12" height="5" viewBox="0 0 12 5"><path d="M11 3.500q-5-5-10 1M11 .5v3H7.500"/></svg>30</button>
    </div>
    <div class="even d-flex justify-content-end">
      <button class="ctl" aria-label="編集"><svg width="12" height="12" viewBox="0 0 12 12"><path d="M1 11l1-3.500L8.500 1q2 0 2.500 2.500L4.500 10zM7 2.500L9.500 5" stroke-width="1.200"/></svg></button>
      <button class="ctl" aria-label="ミニ表示"><svg width="11" height="8" viewBox="0 0 11 8"><path d="M.5.5h10v7H.5z"/><path d="M3 3h5v2H3z"/></svg></button>
      <button class="ctl" aria-label="全画面を終了"><svg width="12" height="12" viewBox="0 0 12 12"><path d="M11.500.5L7 5M7 1.800V5h3.200M.5 11.500L5 7M1.800 7H5v3.200"/></svg></button>
      <button class="ctl" aria-label="その他"><svg width="11" height="3" fill="#fff" viewBox="0 0 11 3" stroke="none"><circle cx="1.500" cy="1.500" r=".9"/><circle cx="5.500" cy="1.500" r=".9"/><circle cx="9.500" cy="1.500" r=".9"/></svg></button>
    </div>
  </div>
</section>

<button class="position-absolute text-white" style="left:9px;top:5px" aria-label="戻る"><svg width="7" height="7" viewBox="0 0 7 7"><path d="M7 3.500H1M3.500 1L1 3.500 3.500 6"/></svg></button>
<button class="nav-x position-absolute start-0 ms-1" aria-label="前へ"><svg width="8" height="13" viewBox="0 0 8 13"><path d="M7 .5l-6 6 6 6"/></svg></button>
<button class="nav-x position-absolute end-0 me-1" aria-label="次へ"><svg width="8" height="13" viewBox="0 0 8 13"><path d="M1 .5l6 6-6 6"/></svg></button>

<script>
const cols = [...'ABCDEFGHIJKLMNOPQRS'];
const heights = {1: 21, 2: 14, 3: 30};
const first = {A: 'Excel基本となる操作方法', C: 1, D: 2, E: 3, F: 5, G: 6};
let html = '<colgroup><col style="width:17px"><col style="width:106px">' + '<col>'.repeat(18) + '<col style="width:12px"></colgroup>';
html += '<thead><tr><th><div class="corner"></div></th>' +
  cols.map(c => `<th${c === 'F' ? ' class="selh"' : ''}>${c}</th>`).join('') + '<th></th></tr></thead><tbody>';
for (let r = 1; r <= 27; r++) {
  html += `<tr${heights[r] ? ` style="height:${heights[r]}px"` : ''}><th>${r}</th>`;
  for (const c of cols) {
    if (r === 3 && 'BCD'.includes(c)) continue;
    if (r === 3 && c === 'A') { html += '<td colspan="4" class="big-text">Excel基本となる操作方法</td>'; continue; }
    const text = r === 1 ? first[c] ?? '' : '';
    const cls = [c === 'F' ? 'sel' : '', c === 'F' && r === 1 ? 'act' : '', typeof text === 'number' ? 'n' : 'palt'].join(' ').trim();
    html += `<td class="${cls}">${text}</td>`;
  }
  html += '<td></td></tr>';
}
document.getElementById('grid').innerHTML = html + '</tbody>';
</script>
<script src="https://cdn.jsdelivr.net/npm/bootstrap@5.3.0/dist/js/bootstrap.bundle.min.js"></script>
</body>
</html>
